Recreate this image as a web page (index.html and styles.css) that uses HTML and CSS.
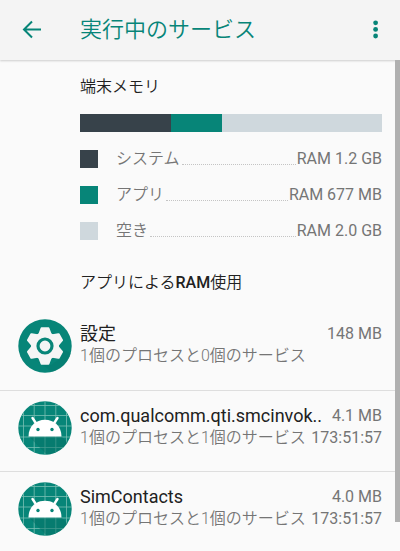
FILE: index.html
```html
<!DOCTYPE html>
<html lang="ja">
<head>
  <meta charset="UTF-8" />
  <meta name="viewport" content="width=device-width, initial-scale=1.0"/>
  <title>実行中のサービス</title>
  <link rel="stylesheet" href="styles.css">
</head>
<body>
  <header class="toolbar">
    <button type="button" class="icon-btn" aria-label="戻る">
      <svg width="20" height="20" viewBox="0 0 20 20" fill="none" stroke="currentColor" stroke-width="2">
        <path d="M20 9.500H3M11 1.500L3 9.500l8 8"/>
      </svg>
    </button>
    <h1>実行中のサービス</h1>
    <button type="button" class="icon-btn" aria-label="その他のオプション">
      <svg width="6" height="20" viewBox="0 0 6 20" fill="currentColor">
        <circle cx="2.600" cy="2.800" r="2.400"/><circle cx="2.600" cy="9.400" r="2.400"/><circle cx="2.600" cy="16" r="2.400"/>
      </svg>
    </button>
  </header>

  <main>
    <section class="memory">
      <h2>端末メモリ</h2>
      <div class="bar">
        <div class="system" style="width: 30%"></div>
        <div class="apps" style="width: 17%"></div>
      </div>
      <ul class="legend">
        <li><span class="swatch system"></span>システム<span class="dots"></span><span class="value">RAM 1.2 GB</span></li>
        <li><span class="swatch apps"></span>アプリ<span class="dots"></span><span class="value">RAM 677 MB</span></li>
        <li><span class="swatch free"></span>空き<span class="dots"></span><span class="value">RAM 2.0 GB</span></li>
      </ul>
      <h2 class="usage-title">アプリによる<b>RAM</b>使用</h2>
    </section>

    <ul class="apps-list">
      <li>
        <svg class="app-icon" viewBox="0 0 54 54">
          <circle cx="27" cy="27" r="26.7" fill="#078578"/>
          <path d="M15 39L24 45 33 46 43 39 46 31 53 34A27 27 0 0 1 34 53Z" fill="#067a6e" opacity=".5"/>
          <g fill="#f5f5f5">
            <circle cx="27" cy="27" r="14"/>
            <path id="tooth" d="M20 16L22.500 9.200Q22.800 8.300 23.500 8.300H30.500Q31.200 8.300 31.500 9.200L34 16Z"/>
            <use href="#tooth" transform="rotate(60 27 27)"/>
            <use href="#tooth" transform="rotate(120 27 27)"/>
            <use href="#tooth" transform="rotate(180 27 27)"/>
            <use href="#tooth" transform="rotate(240 27 27)"/>
            <use href="#tooth" transform="rotate(300 27 27)"/>
          </g>
          <circle cx="27" cy="27" r="7" fill="none" stroke="#078578" stroke-width="3.2"/>
        </svg>
        <div class="info">
          <div class="line"><span class="name">設定</span><span class="value">148 MB</span></div>
          <div class="line"><span>1個のプロセスと0個のサービス</span></div>
        </div>
      </li>
      <li>
        <svg class="app-icon" viewBox="0 0 54 54">
          <defs>
            <clipPath id="disc"><circle cx="27" cy="27" r="26.7"/></clipPath>
          </defs>
          <g id="android" clip-path="url(#disc)">
            <rect width="54" height="54" fill="#078578"/>
            <path d="M5.500 0V54M16.200 0V54M27 0V54M37.800 0V54M48.500 0V54M0 4.500H54M0 14.500H54M0 25H54M0 36H54M0 46.500H54" stroke="#79bfb4" stroke-width=".8"/>
            <path d="M11 35.500H43.500L54 46V54H29Z" fill="#067266" opacity=".5"/>
            <path d="M14.500 17L18.500 23M39.500 17L35.500 23" stroke="#fff" stroke-width="2.400" stroke-linecap="round"/>
            <path d="M10.500 35.500C10.500 25 18 18.800 27 18.800S43.500 25 43.500 35.500Z" fill="#fff"/>
            <circle cx="20" cy="28.500" r="1.700" fill="#078578"/>
            <circle cx="34" cy="28.500" r="1.700" fill="#078578"/>
          </g>
        </svg>
        <div class="info">
          <div class="line"><span class="name">com.qualcomm.qti.smcinvok..</span><span class="value">4.1 MB</span></div>
          <div class="line"><span>1個のプロセスと1個のサービス</span><span class="value">173:51:57</span></div>
        </div>
      </li>
      <li>
        <svg class="app-icon" viewBox="0 0 54 54"><use href="#android"/></svg>
        <div class="info">
          <div class="line"><span class="name">SimContacts</span><span class="value">4.0 MB</span></div>
          <div class="line"><span>1個のプロセスと1個のサービス</span><span class="value">173:51:57</span></div>
        </div>
      </li>
    </ul>
    <div class="scrollbar"></div>
  </main>
</body>
</html>
```
FILE: styles.css
```css
* {
  box-sizing: border-box;
}
body {
  margin: 0;
  background: #fafafa;
  color: #757575;
  font-family: Roboto, "Noto Sans CJK JP", sans-serif;
  font-size: 16px;
  font-weight: 350;
  line-height: 22px;
}
h1, h2, ul {
  margin: 0;
  padding: 0;
  font-weight: 350;
}
ul {
  list-style: none;
}
.toolbar {
  display: flex;
  align-items: center;
  height: 60px;
  padding: 0 21px;
  background: #f4f4f4;
  box-shadow: 0 1px 2px rgba(0,0,0,0.18);
  color: #078578;
}
.toolbar h1 {
  flex: 1;
  margin-left: 39px;
  font-size: 22px;
  line-height: 32px;
}
.icon-btn {
  display: flex;
  padding: 0;
  border: 0;
  background: none;
  color: inherit;
  cursor: pointer;
}
main {
  position: relative;
}
.memory {
  padding: 16px 18px 0 80px;
}
h2 {
  color: #212121;
  font-size: 16px;
}
h2 b {
  font-weight: 500;
}
.usage-title {
  margin-top: 30px;
}
.bar {
  display: flex;
  height: 18px;
  margin: 16px 0;
  background: #cfd8dd;
}
.system {
  background: #37424a;
}
.apps {
  background: #078578;
}
.free {
  background: #cfd8dd;
}
.legend {
  display: grid;
  gap: 14px;
}
.legend li {
  display: flex;
  align-items: center;
}
.swatch {
  width: 18px;
  height: 18px;
  margin-right: 18px;
}
.dots {
  flex: 1;
  align-self: flex-end;
  margin: 0 1px 5px 2px;
  border-bottom: 1px dotted #c4c4c4;
}
.value {
  font-weight: 400;
}
.apps-list {
  margin-top: 15px;
}
.apps-list li {
  display: flex;
  gap: 8px;
  height: 81px;
  padding: 10px 18px 0;
}
.apps-list li + li {
  border-top: 1px solid #dedede;
}
.app-icon {
  flex: none;
  width: 54px;
  height: 54px;
}
.info {
  flex: 1;
  min-width: 0;
  padding-top: 4px;
}
.line {
  display: flex;
  justify-content: space-between;
  white-space: nowrap;
}
.name {
  color: #212121;
  font-size: 18px;
  font-weight: 400;
}
.scrollbar {
  position: absolute;
  top: 0;
  right: 0;
  bottom: 30px;
  width: 5px;
  background: #b0b0b0;
}
```
